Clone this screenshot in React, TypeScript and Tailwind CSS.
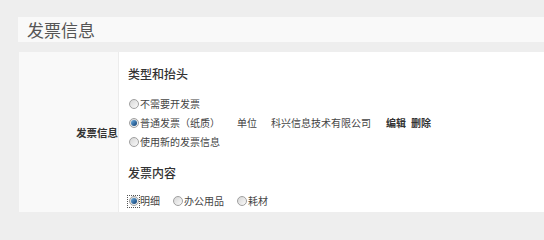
import React from 'react'

const FONT = { fontFamily: '"Noto Sans CJK SC", "Liberation Sans", sans-serif' }

function Radio({ checked = false, focused = false }: { checked?: boolean; focused?: boolean }) {
  return (
    <span
      className={
        'relative inline-flex h-[11px] w-[11px] shrink-0 items-center justify-center ' +
        (focused ? 'outline outline-1 outline-dotted outline-[#555]' : '')
      }
    >
      <span className="flex h-[10px] w-[10px] items-center justify-center rounded-full border border-[#a0a0a0] bg-gradient-to-br from-[#d6d6d6] to-[#fafafa]">
        {checked && <span className="h-[6px] w-[6px] rounded-full bg-gradient-to-br from-[#6fb2e6] to-[#0b3c70]" />}
      </span>
    </span>
  )
}

function Option({ label, checked, focused }: { label: string; checked?: boolean; focused?: boolean }) {
  return (
    <label className="flex items-center gap-[1px] text-[10px] leading-[16px] text-[#444]">
      <Radio checked={checked} focused={focused} />
      <span>{label}</span>
    </label>
  )
}

export default function App() {
  return (
    <div className="h-[240px] w-[544px] overflow-hidden bg-[#eeeeee] pt-[17px] pl-[18px]" style={FONT}>
      {/* Title bar */}
      <div className="flex h-[25px] items-center bg-[#f9f9f9] pl-[9px]">
        <span className="text-[17px] leading-none text-[#555]">发票信息</span>
      </div>

      {/* Panel */}
      <div className="mt-[10px] ml-[1px] flex h-[160px]">
        <div className="flex w-[100px] items-center justify-end border-r border-[#ececec] bg-[#f9f9f9] pt-[2px]">
          <span className="text-[10.5px] font-bold text-[#333]">发票信息</span>
        </div>
        <div className="flex-1 bg-white pl-[9px] pt-[14px]">
          <div className="text-[12px] font-medium leading-[16px] text-[#333]">类型和抬头</div>

          <div className="mt-[14px] flex flex-col gap-[3px]">
            <Option label="不需要开发票" />
            <div className="flex items-center text-[10px] leading-[16px] text-[#444]">
              <Option label="普通发票（纸质）" checked />
              <span className="ml-[17px]">单位</span>
              <span className="ml-[14px]">科兴信息技术有限公司</span>
              <span className="ml-[15px] font-bold text-[#333]">编辑</span>
              <span className="ml-[5px] font-bold text-[#333]">删除</span>
            </div>
            <Option label="使用新的发票信息" />
          </div>

          <div className="mt-[15px] text-[12px] font-medium leading-[16px] text-[#333]">发票内容</div>

          <div className="mt-[12px] flex items-center gap-[12px]">
            <Option label="明细" checked focused />
            <Option label="办公用品" />
            <Option label="耗材" />
          </div>
        </div>
      </div>
    </div>
  )
}
